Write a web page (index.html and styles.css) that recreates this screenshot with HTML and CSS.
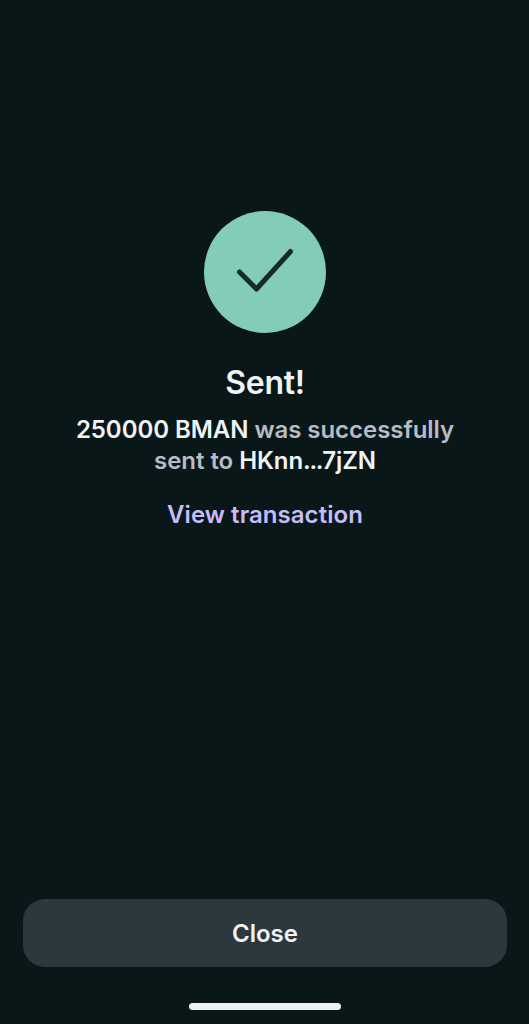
FILE: index.html
```
<!DOCTYPE html>
<html lang="en">

<head>
  <meta charset="UTF-8">
  <meta name="viewport" content="width=device-width, initial-scale=1.0">
  <title>Sent</title>
  <link rel="stylesheet" href="styles.css">
</head>

<body>
  <div class="screen">
    <main class="status">
      <div class="success-icon">
        <svg viewBox="0 0 122 122" width="122" height="122" aria-hidden="true">
          <path d="M35.5 61 L52.5 78 L86.5 40.5" />
        </svg>
      </div>
      <h1>Sent!</h1>
      <p class="message"><strong>250000 BMAN</strong> was successfully<br>sent to <strong>HKnn<span class="dots">...</span>7jZN</strong></p>
      <a href="#" class="link">View transaction</a>
    </main>

    <footer>
      <button type="button" class="close">Close</button>
      <div class="home-bar"></div>
    </footer>
  </div>
</body>

</html>
```
FILE: styles.css
```
* {
  box-sizing: border-box;
}
body {
  font-family: Inter, sans-serif;
  background-color: #0a1718;
  color: #eef3f6;
  margin: 0;
}
.screen {
  display: flex;
  flex-direction: column;
  justify-content: space-between;
  height: 1024px;
  padding: 211px 22px 14px 23px;
}
.status {
  display: flex;
  flex-direction: column;
  align-items: center;
  text-align: center;
}
.success-icon {
  width: 122px;
  height: 122px;
  border-radius: 50%;
  background-color: #83ccb7;
}
.success-icon path {
  fill: none;
  stroke: #17292c;
  stroke-width: 5;
  stroke-linecap: round;
  stroke-linejoin: round;
}
h1 {
  margin: 30px 0 0;
  font-size: 32px;
  line-height: 40px;
  font-weight: 600;
  letter-spacing: -0.3px;
}
.message {
  margin: 11px 0 0;
  font-size: 24px;
  line-height: 31px;
  font-weight: 600;
  letter-spacing: -0.05px;
  color: #b5bcc6;
}
.message strong {
  font-weight: 600;
  color: #eef3f6;
}
.dots {
  letter-spacing: -1.3px;
}
.link {
  margin-top: 23px;
  font-size: 24px;
  line-height: 32px;
  font-weight: 600;
  letter-spacing: 0.05px;
  color: #c4bdfa;
  text-decoration: none;
}
.close {
  display: block;
  width: 100%;
  height: 68px;
  border: none;
  border-radius: 22px;
  background-color: #2c383e;
  color: #eef3f6;
  font-family: inherit;
  font-size: 24px;
  font-weight: 600;
  cursor: pointer;
}
.home-bar {
  width: 152px;
  height: 7px;
  margin: 36px auto 0;
  border-radius: 4px;
  background-color: #edf2f2;
}
```
